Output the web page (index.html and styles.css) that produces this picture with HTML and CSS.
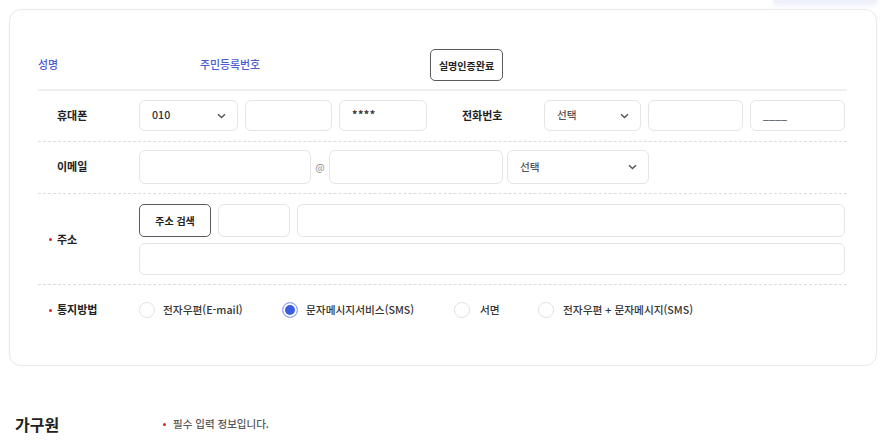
FILE: index.html
```html
<!DOCTYPE html>
<html lang="ko">
<head>
<meta charset="utf-8">
<link rel="stylesheet" href="styles.css">
</head>
<body>
<div class="topstrip"><div class="topbtn"></div></div>
<section class="card">
  <div class="row row-name">
    <span class="blue name-lbl">성명</span>
    <span class="blue rrn-lbl">주민등록번호</span>
    <button class="btn btn-verify">실명인증완료</button>
  </div>
  <div class="row row-phone">
    <span class="label label-phone">휴대폰</span>
    <div class="select w99"><span>010</span><svg class="chev" width="9" height="6" viewBox="0 0 9 6"><path d="M1 1.2 L4.5 4.6 L8 1.2" fill="none" stroke="#555" stroke-width="1.4"/></svg></div>
    <div class="input w87"></div>
    <div class="input w88"><span class="stars">****</span></div>
    <span class="label label-tel">전화번호</span>
    <div class="select w97"><span class="muted">선택</span><svg class="chev" width="9" height="6" viewBox="0 0 9 6"><path d="M1 1.2 L4.5 4.6 L8 1.2" fill="none" stroke="#555" stroke-width="1.4"/></svg></div>
    <div class="input w95"></div>
    <div class="input w95"><span class="muted">____</span></div>
  </div>
  <div class="row row-email">
    <span class="label">이메일</span>
    <div class="input w172 h34"></div>
    <span class="at">@</span>
    <div class="input w174 h34"></div>
    <div class="select w142 h34"><span class="muted">선택</span><svg class="chev" width="9" height="6" viewBox="0 0 9 6"><path d="M1 1.2 L4.5 4.6 L8 1.2" fill="none" stroke="#555" stroke-width="1.4"/></svg></div>
  </div>
  <div class="row row-addr">
    <span class="label"><i class="dot"></i>주소</span>
    <div class="addr">
      <div class="addr-line">
        <button class="btn btn-search">주소 검색</button>
        <div class="input w72 h33"></div>
        <div class="input grow h33"></div>
      </div>
      <div class="input full h32"></div>
    </div>
  </div>
  <div class="row row-notice">
    <span class="label"><i class="dot"></i>통지방법</span>
    <div class="radios">
      <label class="radio r1"><span class="circle"></span>전자우편(E-mail)</label>
      <label class="radio r2"><span class="circle on"></span>문자메시지서비스(SMS)</label>
      <label class="radio r3"><span class="circle"></span>서면</label>
      <label class="radio r4"><span class="circle"></span>전자우편 + 문자메시지(SMS)</label>
    </div>
  </div>
</section>
<div class="section-head">
  <h2 class="title">가구원</h2>
  <p class="req"><i class="dot"></i>필수 입력 정보입니다.</p>
</div>
</body>
</html>
```
FILE: styles.css
```css
* { box-sizing: border-box; }
html, body { margin: 0; padding: 0; background: #fff; }
body {
  font-family: "Noto Sans CJK KR", "Noto Sans", sans-serif;
  font-size: 10.7px;
  color: #222;
  line-height: 1.2;
}
.topstrip {
  height: 9px;
  display: flex;
  justify-content: flex-end;
  padding-right: 12px;
}
.topbtn {
  width: 104px;
  height: 3px;
  background: #eef0fc;
  border-radius: 0 0 8px 8px;
  box-shadow: 0 2px 4px rgba(100, 110, 230, 0.16);
}
.card {
  margin: 0 12px 0 9px;
  border: 1px solid #e9e9e9;
  border-radius: 12px;
  padding: 0 29px 30px 28px;
  box-shadow: 0 0 2px rgba(0,0,0,0.03);
}
.row {
  display: flex;
  align-items: center;
  border-bottom: 1px dashed #dcdcdc;
}
.row-name {
  padding: 39px 0 8px;
  border-bottom: 2px solid #efefef;
}
.blue { color: #4b5bd6; font-weight: 500; font-size: 10.9px; }
.name-lbl { width: 162px; }
.rrn-lbl { width: 230px; }
.btn {
  font-family: inherit;
  font-size: 10px;
  font-weight: 700;
  color: #222;
  background: #fff;
  border: 1px solid #5a5a5a;
  border-radius: 5px;
  padding: 0;
  cursor: pointer;
}
.btn-verify { width: 73px; height: 32px; }
.btn-search { width: 72px; height: 33px; }
.row-phone { padding: 9px 0 10px; gap: 7px; }
.row-email { padding: 8px 0 9px; gap: 4px; }
.row-addr { padding: 10px 0 9px; }
.row-notice { height: 50px; border-bottom: none; }
.label {
  width: 101px;
  padding-left: 19px;
  font-weight: 700;
  font-size: 11px;
  color: #222;
  display: flex;
  align-items: center;
  flex-shrink: 0;
}
.label-phone { width: 94px; }
.label-tel { width: 103px; padding-left: 28px; }
.dot {
  display: inline-block;
  width: 3px;
  height: 3px;
  border-radius: 50%;
  background: #e0262b;
  margin-left: -8px;
  margin-right: 5px;
}
.input, .select {
  height: 31px;
  border: 1px solid #e5e5e5;
  border-radius: 6px;
  background: #fff;
  display: flex;
  align-items: center;
  padding: 0 12px;
  color: #333;
  font-weight: 500;
  flex-shrink: 0;
}
.select { justify-content: space-between; padding-right: 11px; }
.muted { color: #555; }
.stars { letter-spacing: 0.5px; font-weight: 700; }
.w99 { width: 99px; }
.w87 { width: 87px; }
.w88 { width: 88px; }
.w97 { width: 97px; }
.w95 { width: 95px; }
.w72 { width: 72px; }
.w172 { width: 172px; }
.w174 { width: 174px; }
.w142 { width: 142px; }
.h32 { height: 32px; }
.h33 { height: 33px; }
.h34 { height: 34px; }
.at { width: 10px; color: #888; font-size: 10px; text-align: center; }
.row-email .label { margin-right: -4px; }
.addr { display: flex; flex-direction: column; gap: 6px; flex: 1; margin-right: 2px; }
.addr-line { display: flex; gap: 7px; }
.grow { flex: 1; }
.full { width: 100%; }
.radios { display: flex; align-items: center; }
.radio {
  display: flex;
  align-items: center;
  gap: 8px;
  color: #333;
  font-weight: 500;
  flex-shrink: 0;
}
.r1 { width: 143px; }
.r2 { width: 172px; }
.r3 { width: 84px; gap: 10px; }
.r4 { gap: 9px; }
.circle {
  width: 16px;
  height: 16px;
  border-radius: 50%;
  border: 1px solid #e2e2e2;
  background: #fff;
  display: inline-block;
}
.circle.on {
  border-color: #9fadf0;
  background: #3b5ee0;
  box-shadow: inset 0 0 0 2px #fff;
}
.section-head {
  display: flex;
  align-items: center;
  margin-top: 46px;
  padding-left: 15px;
}
.title {
  margin: 0;
  width: 148px;
  font-size: 16px;
  font-weight: 700;
  color: #222;
  line-height: 24px;
}
.req {
  margin: 0;
  font-size: 10.5px;
  font-weight: 500;
  color: #555;
  display: flex;
  align-items: center;
  padding-left: 8px;
}
.req .dot { margin-left: -8px; margin-right: 7px; }
```
